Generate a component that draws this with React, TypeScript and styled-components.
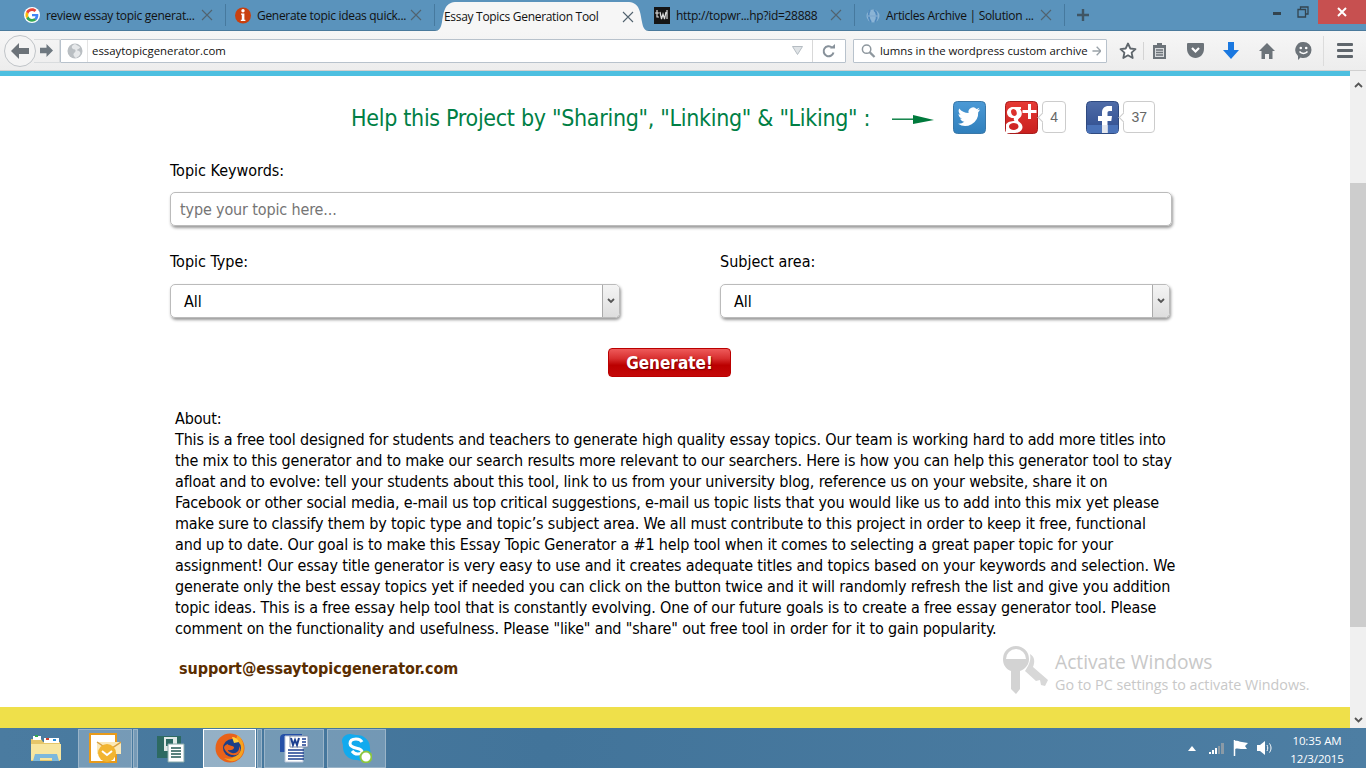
import React from "react";
import styled, { createGlobalStyle } from "styled-components";

const GlobalStyle = createGlobalStyle`
  html, body { margin: 0; padding: 0; background: #fff; overflow: hidden; }
  * { box-sizing: border-box; }
`;

const Close = () => (
  <svg width="12" height="12" viewBox="0 0 12 12"><path d="M1 1l10 10M11 1L1 11" stroke="#52636f" strokeWidth="1.100" fill="none" /></svg>
);

const GoogleIcon = () => (
  <svg width="16" height="16" viewBox="0 0 48 48">
    <circle cx="24" cy="24" r="24" fill="#fff" />
    <path d="M43 24.5c0-1.5-.1-2.6-.4-3.8H24v7.2h10.7c-.5 2.8-2 5-4.300 6.500l6.600 5.100C41 36 43 30.800 43 24.500z" fill="#4285f4" />
    <path d="M24 44c5.400 0 9.900-1.800 13-4.900l-6.600-5.100c-1.700 1.200-4 2-6.400 2-5 0-9.200-3.300-10.700-7.900l-6.800 5.300C9.800 39.800 16.400 44 24 44z" fill="#34a853" />
    <path d="M13.300 28.100c-.8-2.600-.8-5.500 0-8.200L6.500 14.600c-2.900 5.800-2.900 13 0 18.800z" fill="#fbbc05" />
    <path d="M24 12c3 0 5.600 1 7.600 3l5.700-5.700C33.900 6 29.400 4 24 4 16.400 4 9.800 8.200 6.500 14.600l6.800 5.300C14.800 15.300 19 12 24 12z" fill="#ea4335" />
  </svg>
);

const InfoIcon = () => (
  <svg width="16" height="17" viewBox="0 0 16 17">
    <circle cx="8" cy="8.500" r="8" fill="#c9400f" />
    <circle cx="8" cy="3.700" r="1.700" fill="#fff" />
    <path d="M6 6.500h3.400v6.300h1v1.200H5.800v-1.200h1V7.700H6z" fill="#fff" />
  </svg>
);

const TwIcon = () => (
  <svg width="16" height="17" viewBox="0 0 16 17">
    <rect width="16" height="17" fill="#151515" />
    <path d="M1 6h4M3 3v7h2M6 5l1.500 7L9 7l1.500 5L12 5M13 3v9" stroke="#ddd" strokeWidth="1.200" fill="none" />
  </svg>
);

const GlobeSmall = () => (
  <svg width="14" height="17" viewBox="0 0 14 17">
    <circle cx="7" cy="9" r="6.500" fill="#9fc2e0" opacity=".7" />
    <path d="M4 3c-2 3-2 8 1 12M8 3c3 2 4 8 1 12" stroke="#4f88bc" strokeWidth="1.800" fill="none" />
    <path d="M1 9h11" stroke="#7ea9cf" strokeWidth="1.400" />
  </svg>
);

const TABS = [
  { icon: <GoogleIcon />, title: "review essay topic generat...", width: 211, pad: 9 },
  { icon: <InfoIcon />, title: "Generate topic ideas quick...", width: 209, pad: 9 },
];

const TABS_AFTER = [
  { icon: <TwIcon />, title: "http://topwr...hp?id=28888", width: 208, pad: 7 },
  { icon: <GlobeSmall />, title: "Articles Archive | Solution ...", width: 210, pad: 11 },
];

const Browser = () => (
  <>
    <TabStrip>
      {TABS.map((t) => (
        <Tab key={t.title} $w={t.width} $pl={t.pad}>
          {t.icon}
          <TabTitle>{t.title}</TabTitle>
          <Close />
        </Tab>
      ))}
      <ActiveTab>
        <TabTitle>Essay Topics Generation Tool</TabTitle>
        <Close />
      </ActiveTab>
      {TABS_AFTER.map((t) => (
        <Tab key={t.title} $w={t.width} $pl={t.pad}>
          {t.icon}
          <TabTitle>{t.title}</TabTitle>
          <Close />
        </Tab>
      ))}
      <NewTab>
        <svg width="14" height="14" viewBox="0 0 14 14"><path d="M7 1v12M1 7h12" stroke="#3f5564" strokeWidth="2.400" /></svg>
      </NewTab>
      <WindowButtons>
        <WinBtn>
          <svg width="10" height="10" viewBox="0 0 10 10"><rect x="1" y="5" width="8" height="3" fill="#33444f" /></svg>
        </WinBtn>
        <WinBtn>
          <svg width="12" height="12" viewBox="0 0 12 12"><path d="M3.500 3V1h7.500v7H9M1 3.500h7.500V11H1z" stroke="#33444f" strokeWidth="1.300" fill="none" /></svg>
        </WinBtn>
        <WinClose>
          <svg width="10" height="10" viewBox="0 0 10 10"><path d="M1 1l8 8M9 1L1 9" stroke="#fff" strokeWidth="2" /></svg>
        </WinClose>
      </WindowButtons>
    </TabStrip>
    <NavBar>
      <BackBtn>
        <svg width="18" height="16" viewBox="0 0 18 16"><path d="M8 0L0 8l8 8v-5h10V5H8z" fill="#6c7379" /></svg>
      </BackBtn>
      <ForwardBtn>
        <svg width="13" height="13" viewBox="0 0 14 14"><path d="M7 0l7 7-7 7v-4H0V4h7z" fill="#6e7880" /></svg>
      </ForwardBtn>
      <UrlBar>
        <UrlGlobe>
          <svg width="16" height="16" viewBox="0 0 16 16">
            <circle cx="8" cy="8" r="7.500" fill="#b9bec2" />
            <path d="M8 1c-3 1-4 3-2.500 4.500S9 6 8.500 8 6 10 6.500 12 9 15 9 15l3-2c1-2 2-2 1-4s-3-1-3-2 3-1 3-3z" fill="#e6e8ea" />
          </svg>
        </UrlGlobe>
        <UrlText>essaytopicgenerator.com</UrlText>
        <UrlDrop>
          <svg width="11" height="9" viewBox="0 0 11 9"><path d="M.500.500h10L5.500 8.500z" fill="#dfe3e6" stroke="#b5bcc2" /></svg>
        </UrlDrop>
        <UrlReload>
          <svg width="14" height="14" viewBox="0 0 14 14"><path d="M11.500 8.500A5 5 0 1 1 10 3.500" stroke="#87919a" strokeWidth="2" fill="none" /><path d="M8 4.500h5V0z" fill="#87919a" /></svg>
        </UrlReload>
      </UrlBar>
      <SearchBar>
        <svg width="16" height="16" viewBox="0 0 16 16"><circle cx="6" cy="6" r="4.500" stroke="#8e979e" strokeWidth="1.600" fill="#fff" /><path d="M9.500 9.500l5 5" stroke="#8e979e" strokeWidth="2.400" /></svg>
        <SearchText>lumns in the wordpress custom archive</SearchText>
        <svg width="10" height="10" viewBox="0 0 10 10"><path d="M5 .5L9.500 5 5 9.500M.5 5h8.500" stroke="#9aa2a8" strokeWidth="1.500" fill="none" /></svg>
      </SearchBar>
      <ToolIcons>
        <ToolIcon>
          <svg width="18" height="18" viewBox="0 0 18 18"><path d="M9 1.500l2.300 5 5.200.6-3.900 3.600 1.100 5.300L9 13.300 4.300 16l1.100-5.300L1.500 7.100l5.200-.6z" stroke="#5f666c" strokeWidth="1.800" fill="#fff" strokeLinejoin="round" /></svg>
        </ToolIcon>
        <ToolDivider />
        <ToolIcon>
          <svg width="15" height="17" viewBox="0 0 15 17"><path d="M1 3h4V1h5v2h4v14H1z" fill="#6c7379" /><path d="M3 6h9v9H3z" fill="#d8dbdd" /><path d="M4 8h7M4 10.500h7M4 13h7" stroke="#6c7379" strokeWidth="1.300" /></svg>
        </ToolIcon>
        <ToolIcon>
          <svg width="17" height="15" viewBox="0 0 17 15"><path d="M1 0h15a1 1 0 0 1 1 1v5c0 5-4 9-8.500 9S0 11 0 6V1a1 1 0 0 1 1-1z" fill="#6c7379" /><path d="M5 5l3.500 3.500L12 5" stroke="#fff" strokeWidth="2.200" fill="none" /></svg>
        </ToolIcon>
        <ToolIcon>
          <svg width="16" height="17" viewBox="0 0 16 17"><path d="M5 0h6v8h5l-8 9-8-9h5z" fill="#1a78e0" /></svg>
        </ToolIcon>
        <ToolIcon>
          <svg width="16" height="16" viewBox="0 0 16 16"><path d="M8 0l8 8h-2.500v8H10v-5H6v5H2.500V8H0z" fill="#6c7379" /></svg>
        </ToolIcon>
        <ToolIcon>
          <svg width="17" height="18" viewBox="0 0 17 18"><path d="M8.500 0a8 8 0 0 1 0 16c-1 0-2 0-3-.5L3 18v-4A8 8 0 0 1 8.500 0z" fill="#6c7379" /><circle cx="5.800" cy="6" r="1.300" fill="#fff" /><circle cx="11.200" cy="6" r="1.300" fill="#fff" /><path d="M4.500 9.500c2 2.500 6 2.500 8 0" stroke="#fff" strokeWidth="1.500" fill="none" /></svg>
        </ToolIcon>
      </ToolIcons>
      <MenuDivider />
      <MenuIcon>
        <span /><span /><span />
      </MenuIcon>
    </NavBar>
    <CyanStrip />
  </>
);

const TwitterTile = () => (
  <svg width="33" height="33" viewBox="0 0 33 33">
    <defs>
      <linearGradient id="twg" x1="0" y1="0" x2="0" y2="1"><stop offset="0" stopColor="#4c9ad6" /><stop offset="1" stopColor="#2f7fbc" /></linearGradient>
    </defs>
    <rect x=".5" y=".5" width="32" height="32" rx="4" fill="url(#twg)" stroke="#3a78a8" />
    <path d="M27 8.600c-.8.400-1.700.6-2.600.7.900-.6 1.600-1.400 2-2.500-.9.500-1.900.9-2.900 1.100a4.600 4.600 0 0 0-7.900 4.200C11.800 12 8.400 10.200 6.200 7.400c-1.200 2.100-.6 4.800 1.400 6.100-.7 0-1.400-.2-2.100-.6 0 2.200 1.600 4.200 3.700 4.600-.7.200-1.400.2-2.100.1.600 1.900 2.300 3.200 4.300 3.200A9.300 9.300 0 0 1 5 22.800a13.100 13.100 0 0 0 20.200-11.600c.8-.7 1.400-1.500 1.800-2.600z" fill="#fff" />
  </svg>
);

const GplusTile = () => (
  <svg width="33" height="33" viewBox="0 0 33 33">
    <defs>
      <linearGradient id="gpg" x1="0" y1="0" x2="0" y2="1"><stop offset="0" stopColor="#e63a35" /><stop offset="1" stopColor="#c9201f" /></linearGradient>
    </defs>
    <rect x=".5" y=".5" width="32" height="32" rx="4" fill="url(#gpg)" stroke="#a81c1c" />
    <path d="M16 6H8C4.500 6 2 8.500 2 11.500S4.500 17 8 17h1c-.5 1-.3 2 .5 3-3 0-7.500 1-8.500 3.500V32h9c4 0 7.500-2.500 7.500-6 0-4-4.500-5-4.500-7 0-1.500 3.800-2.500 3.800-6.500 0-2-1-3.500-1.800-4.500H16zM8.500 8c2 0 3.300 2.200 3.300 4.300 0 1.700-1 2.700-2.500 2.700-2 0-3.300-2.400-3.300-4.400C6 9 7 8 8.500 8zm.4 14c2.600 0 4.600 1.500 4.600 3.500 0 1.800-1.800 3.500-4.500 3.500-3 0-5-1.500-5-3.500s2.200-3.500 4.900-3.500z" fill="#fff" />
    <path d="M23 3h3v6h5.500v3H26v6h-3v-6h-5.500V9H23z" fill="#fff" />
  </svg>
);

const FacebookTile = () => (
  <svg width="33" height="33" viewBox="0 0 33 33">
    <defs>
      <linearGradient id="fbg" x1="0" y1="0" x2="0" y2="1"><stop offset="0" stopColor="#4f6ca8" /><stop offset="1" stopColor="#2f4d8e" /></linearGradient>
    </defs>
    <rect x=".5" y=".5" width="32" height="32" rx="4" fill="url(#fbg)" stroke="#2f4a80" />
    <path d="M1 24h31v7a1 1 0 0 1-1 1H2a1 1 0 0 1-1-1z" fill="#4a72b8" />
    <path d="M16 32V20h-4v-5h4v-3.500C16 7.500 18.500 5 22.500 5H26v5h-2.500c-1.500 0-2 .7-2 2v3H26l-.7 5h-3.800v12z" fill="#fff" />
    <path d="M16 24h5.500v8H16z" fill="#e4e7ee" />
  </svg>
);

const TopicForm = () => (
  <Form>
    <ShareRow>
      <ShareText>Help this Project by "Sharing", "Linking" &amp; "Liking" :</ShareText>
      <ShareArrow>
        <svg width="42" height="10" viewBox="0 0 42 10"><path d="M0 4.200h22" stroke="#007a3c" strokeWidth="1.400" /><path d="M21 0l21 5-21 4z" fill="#007a3c" /></svg>
      </ShareArrow>
      <Social $gap={19}><TwitterTile /></Social>
      <Social $gap={20}>
        <GplusTile />
        <Count $w={24}>4</Count>
      </Social>
      <Social $gap={0}>
        <FacebookTile />
        <Count $w={32}>37</Count>
      </Social>
    </ShareRow>
    <FieldLabel>Topic Keywords:</FieldLabel>
    <TextField>type your topic here...</TextField>
    <SelectRow>
      <SelectColumn>
        <FieldLabel>Topic Type:</FieldLabel>
        <SelectBox>
          <SelectValue>All</SelectValue>
          <SelectArrow><Chevron /></SelectArrow>
        </SelectBox>
      </SelectColumn>
      <SelectColumn>
        <FieldLabel>Subject area:</FieldLabel>
        <SelectBox>
          <SelectValue>All</SelectValue>
          <SelectArrow><Chevron /></SelectArrow>
        </SelectBox>
      </SelectColumn>
    </SelectRow>
    <ButtonRow>
      <GenerateButton>Generate!</GenerateButton>
    </ButtonRow>
    <About>
      About:<br />
      This is a free tool designed for students and teachers to generate high quality essay topics. Our team is working hard to add more titles into<br />
      the mix to this generator and to make our search results more relevant to our searchers. Here is how you can help this generator tool to stay<br />
      afloat and to evolve: tell your students about this tool, link to us from your university blog, reference us on your website, share it on<br />
      Facebook or other social media, e-mail us top critical suggestions, e-mail us topic lists that you would like us to add into this mix yet please<br />
      make sure to classify them by topic type and topic’s subject area. We all must contribute to this project in order to keep it free, functional<br />
      and up to date. Our goal is to make this Essay Topic Generator a #1 help tool when it comes to selecting a great paper topic for your<br />
      assignment! Our essay title generator is very easy to use and it creates adequate titles and topics based on your keywords and selection. We<br />
      generate only the best essay topics yet if needed you can click on the button twice and it will randomly refresh the list and give you addition<br />
      topic ideas. This is a free essay help tool that is constantly evolving. One of our future goals is to create a free essay generator tool. Please<br />
      comment on the functionality and usefulness. Please "like" and "share" out free tool in order for it to gain popularity.
    </About>
    <Support>support@essaytopicgenerator.com</Support>
  </Form>
);

const Chevron = () => (
  <svg width="8" height="6" viewBox="0 0 8 6"><path d="M1 1l3 3 3-3" stroke="#555" strokeWidth="1.800" fill="none" /></svg>
);

const Taskbar = () => (
  <TaskbarRow>
    <TaskPlain $w={78} $pl={30}>
      <svg width="32" height="30" viewBox="0 0 32 30">
        <path d="M1 6h10l2 3h17v19H1z" fill="#e6c66a" />
        <path d="M3 3h8v4H3z" fill="#fff" /><path d="M5 2h3v2H5z" fill="#2fa84f" />
        <path d="M14 5h15v5H14z" fill="#fff" /><path d="M16 5h3v2h-3z" fill="#d04030" /><path d="M23 6h3v2h-3z" fill="#2a90d8" />
        <path d="M1 11h30v16H1z" fill="#f8e6a0" />
        <path d="M5 21h22l2 7H22v-3H10v3H3z" fill="#7db8dc" />
      </svg>
    </TaskPlain>
    <TaskButton $w={54}>
      <svg width="32" height="30" viewBox="0 0 32 30">
        <path d="M1 1h26v28H1z" fill="#fff" stroke="#e89a1a" strokeWidth="2" />
        <path d="M8 9h24v12H8z" fill="#fbe9b8" />
        <path d="M8 9l12 8 12-8" stroke="#d8a040" strokeWidth="1.500" fill="none" />
        <circle cx="18" cy="20" r="9" fill="#f2b530" />
        <path d="M13 18l5 4 5-4" stroke="#fff" strokeWidth="2" fill="none" />
      </svg>
    </TaskButton>
    <TaskStack />
    <TaskPlain $w={65} $pl={17}>
      <svg width="30" height="30" viewBox="0 0 30 30">
        <path d="M2 3h24v22H2z" fill="#2d6a62" />
        <path d="M9 4h13v14H9z" fill="#dfe8e6" />
        <path d="M11 6h7v7h-7z" fill="#2d6a62" />
        <path d="M13 11h16v18H13z" fill="#fff" stroke="#8aa" />
        <path d="M16 15h10M16 18h10M16 21h10M16 24h10" stroke="#245a54" strokeWidth="1.500" />
      </svg>
    </TaskPlain>
    <TaskActive>
      <svg width="30" height="30" viewBox="0 0 30 30">
        <circle cx="15" cy="15" r="14.500" fill="#e8621a" />
        <path d="M22 2c6 3 9 13 5 20S15 30 9 25c5 2 11 0 13-5s1-8-3-9-7 2-7 2 1-5 6-6 4-5 4-5z" fill="#f6a21e" />
        <circle cx="17" cy="15" r="9" fill="#1b3f88" />
        <path d="M9 15c2 5 7 8 12 7s5-6 3-9c1 5-3 8-7 7s-4-3-4-3 5 1 6-2-7-2-6-4c-3 1-4 2-4 4z" fill="#e8621a" />
        <path d="M17 4c3 0 6 2 7 5l-5 1z" fill="#ffcf3a" />
      </svg>
    </TaskActive>
    <TaskStack />
    <TaskButton $w={60} $ml={2}>
      <svg width="30" height="30" viewBox="0 0 30 30">
        <path d="M1 5c0-3 2-4 4-4h18v18H1z" fill="#2550a8" />
        <path d="M6 3h18v26H6z" fill="#fff" stroke="#b8c4d8" />
        <path d="M11 3h18v11H11z" fill="#fff" stroke="#7a8aa8" />
        <path d="M12 5l2 7 2-5 2 5 2-7" stroke="#1c3f90" strokeWidth="2" fill="none" />
        <path d="M23 6h4M23 9h4M23 12h4M9 17h16M9 20h16M9 23h16M9 26h16" stroke="#1c3f90" strokeWidth="1.500" />
      </svg>
    </TaskButton>
    <TaskButton $w={59} $ml={3}>
      <svg width="30" height="30" viewBox="0 0 30 30">
        <path d="M8 1c2 0 4 1 6 1a13 13 0 0 1 14 13c0 2 .5 3 .5 5 0 5-4 8-8 8-2 0-4-1-6-1A13 13 0 0 1 1 13c0-2-1-3-1-5 0-4 4-7 8-7z" fill="#12aaee" />
        <path d="M20 9c-1-2-3-3-6-3-4 0-6 2-6 4.500 0 6 12 3.500 12 8 0 1.500-2 2.500-4.500 2.500-3 0-4-1-5.500-3" stroke="#fff" strokeWidth="3" fill="none" />
        <circle cx="24" cy="24" r="5.500" fill="#fff" stroke="#8cc63f" strokeWidth="2" />
      </svg>
    </TaskButton>
    <Tray>
      <TrayArrow>
        <svg width="8" height="5" viewBox="0 0 8 5"><path d="M0 5l4-5 4 5z" fill="#fff" /></svg>
      </TrayArrow>
      <svg width="16" height="12" viewBox="0 0 16 12"><path d="M0 10h2v2H0zM3 8h2v4H3zM6 6h2v6H6z" fill="#fff" /><path d="M9 4h2v8H9zM12 1h3v11h-3z" fill="#8a9aa6" /></svg>
      <svg width="16" height="16" viewBox="0 0 16 16"><path d="M1.500 0v16" stroke="#fff" strokeWidth="1.500" /><path d="M2 1c4-1 4 1 7 1l6 1-3 3 2 3-6 0c-2 0-3-1-6 0z" fill="#fff" /></svg>
      <svg width="16" height="14" viewBox="0 0 16 14"><path d="M0 4h3l5-4v14l-5-4H0z" fill="#fff" /><path d="M10 4c1 2 1 4 0 6M12.500 2.500c2 3 2 6 0 9" stroke="#fff" strokeWidth="1" fill="none" /></svg>
      <Clock>
        <span>10:35 AM</span>
        <span>12/3/2015</span>
      </Clock>
    </Tray>
  </TaskbarRow>
);

const App = () => (
  <Screen>
    <GlobalStyle />
    <Browser />
    <PageArea>
      <PageColumn>
        <TopicForm />
        <YellowFooter />
      </PageColumn>
      <Scrollbar>
        <ScrollArrow>
          <svg width="9" height="6" viewBox="0 0 9 6"><path d="M1 5l3.500-3.500L8 5" stroke="#555" strokeWidth="1.800" fill="none" /></svg>
        </ScrollArrow>
        <ScrollGap $h={90} />
        <ScrollThumb />
        <ScrollGap $h={84} />
        <ScrollArrow>
          <svg width="9" height="6" viewBox="0 0 9 6"><path d="M1 1l3.500 3.500L8 1" stroke="#555" strokeWidth="1.800" fill="none" /></svg>
        </ScrollArrow>
      </Scrollbar>
      <Watermark>
        <WatermarkKey>
          <svg width="48" height="50" viewBox="0 0 48 50">
            <path d="M14 1a13 13 0 0 1 13 13c0 6-4 10-9 12v18l-4 5-5-5V26C4 24 1 20 1 14A13 13 0 0 1 14 1z" fill="#d3d3d3" />
            <path d="M4 14a10 10 0 0 1 20 0z" fill="#fff" />
            <path d="M28 9c5 3 5 8 3 13l15 13-3 6-4-1-1-5-4 1-11-10 3-5c2-4 3-8 2-12z" fill="#d8d8d8" />
          </svg>
        </WatermarkKey>
        <WatermarkText>
          <WatermarkTitle>Activate Windows</WatermarkTitle>
          <WatermarkSub>Go to PC settings to activate Windows.</WatermarkSub>
        </WatermarkText>
      </Watermark>
    </PageArea>
    <Taskbar />
  </Screen>
);

export default App;

const Screen = styled.div`
  width: 1366px;
  height: 768px;
  display: flex;
  flex-direction: column;
  overflow: hidden;
  background: #fff;
`;

const TabStrip = styled.div`
  height: 31px;
  flex: none;
  display: flex;
  align-items: center;
  padding-left: 15px;
  background: #5a93bc;
  border-bottom: 1px solid #4a7a9c;
`;

const Tab = styled.div<{ $w: number; $pl: number }>`
  width: ${({ $w }) => $w}px;
  height: 22px;
  flex: none;
  display: flex;
  align-items: center;
  padding: 0 12px 0 ${({ $pl }) => $pl}px;
  border-right: 1px solid #46799e;
  svg { flex: none; }
`;

const ActiveTab = styled.div`
  width: 214px;
  height: 29px;
  flex: none;
  align-self: flex-end;
  display: flex;
  align-items: center;
  padding: 0 15px 0 9px;
  margin: 0 -2px -1px 0;
  background: #f6f6f6;
  clip-path: path("M0 29 C4 29 6 26 7 20 C9 8 10 0 22 0 L192 0 C204 0 205 8 207 20 C208 26 210 29 214 29 Z");
  svg { flex: none; }
`;

const TabTitle = styled.span`
  flex: 1;
  padding-left: 6px;
  font: 12px "Open Sans", sans-serif;
  letter-spacing: -0.3px;
  color: #111;
  white-space: nowrap;
  ${ActiveTab} & { padding-left: 0; }
`;

const NewTab = styled.div`
  margin-left: 11px;
  display: flex;
`;

const WindowButtons = styled.div`
  margin-left: auto;
  align-self: flex-start;
  display: flex;
`;

const WinBtn = styled.div`
  width: 26px;
  height: 24px;
  display: flex;
  align-items: center;
  justify-content: center;
`;

const WinClose = styled.div`
  width: 48px;
  height: 24px;
  margin-left: 2px;
  display: flex;
  align-items: center;
  justify-content: center;
  background: #c75050;
`;

const NavBar = styled.div`
  height: 40px;
  flex: none;
  display: flex;
  align-items: center;
  padding-left: 4px;
  background: linear-gradient(#f6f6f6, #ededed);
  border-bottom: 1px solid #d0d0d0;
`;

const BackBtn = styled.div`
  width: 32px;
  height: 32px;
  flex: none;
  display: flex;
  align-items: center;
  justify-content: center;
  border: 1px solid #c0c4c8;
  border-radius: 50%;
  background: #f4f4f4;
  z-index: 1;
`;

const ForwardBtn = styled.div`
  width: 26px;
  height: 24px;
  margin-left: -2px;
  flex: none;
  display: flex;
  align-items: center;
  justify-content: center;
  border: 1px solid #d9dcde;
  border-left: none;
`;

const UrlBar = styled.div`
  width: 786px;
  height: 24px;
  flex: none;
  display: flex;
  align-items: center;
  background: #fff;
  border: 1px solid #b8c2cc;
  border-radius: 1px;
`;

const UrlGlobe = styled.div`
  width: 27px;
  height: 100%;
  padding-left: 6px;
  display: flex;
  align-items: center;
  border-right: 1px solid #e4e4e4;
`;

const UrlText = styled.span`
  flex: 1;
  padding-left: 4px;
  font: 11.4px "Open Sans", sans-serif;
  color: #111;
`;

const UrlDrop = styled.div`
  width: 30px;
  height: 100%;
  display: flex;
  align-items: center;
  justify-content: center;
  border-right: 1px solid #d8d8d8;
`;

const UrlReload = styled.div`
  width: 32px;
  display: flex;
  justify-content: center;
`;

const SearchBar = styled.div`
  width: 254px;
  height: 24px;
  margin-left: 7px;
  flex: none;
  display: flex;
  align-items: center;
  gap: 4px;
  padding: 0 5px 0 7px;
  background: #fff;
  border: 1px solid #b8c2cc;
  border-radius: 1px;
`;

const SearchText = styled.span`
  flex: 1;
  font: 11.4px "Open Sans", sans-serif;
  letter-spacing: -0.03px;
  color: #111;
  white-space: nowrap;
`;

const ToolIcons = styled.div`
  display: flex;
  align-items: center;
  margin-left: 3px;
`;

const ToolIcon = styled.div`
  width: 36px;
  display: flex;
  justify-content: center;
  &:nth-child(3) { margin-left: -3px; }
`;

const ToolDivider = styled.div`
  width: 1px;
  height: 18px;
  margin-left: -3px;
  background: #d4d4d4;
`;

const MenuDivider = styled.div`
  width: 1px;
  height: 30px;
  margin-left: 2px;
  background: #dcdcdc;
`;

const MenuIcon = styled.div`
  width: 16px;
  margin-left: 13px;
  display: flex;
  flex-direction: column;
  gap: 3px;
  span {
    height: 3px;
    border-radius: 1px;
    background: #5f666c;
  }
`;

const CyanStrip = styled.div`
  height: 5px;
  flex: none;
  background: #4dbfe0;
  border-right: 16px solid #f0f0f0;
`;

const PageArea = styled.div`
  position: relative;
  flex: 1;
  min-height: 0;
  display: flex;
`;

const PageColumn = styled.div`
  flex: 1;
  min-width: 0;
  display: flex;
  flex-direction: column;
`;

const Form = styled.div`
  flex: 1;
  min-height: 0;
  padding: 0 178px 0 170px;
  font-family: "DejaVu Sans", Tahoma, sans-serif;
  font-stretch: condensed;
`;

const ShareRow = styled.div`
  height: 82px;
  display: flex;
  align-items: center;
  padding-left: 181px;
`;

const ShareText = styled.div`
  margin-top: 2px;
  font-size: 23px;
  letter-spacing: -0.3px;
  color: #007f45;
  white-space: nowrap;
`;

const ShareArrow = styled.div`
  margin: 6px 19px 0 22px;
  display: flex;
`;

const Social = styled.div<{ $gap: number }>`
  display: flex;
  align-items: center;
  margin-right: ${({ $gap }) => $gap}px;
`;

const Count = styled.div<{ $w: number }>`
  position: relative;
  width: ${({ $w }) => $w}px;
  height: 32px;
  margin-left: 4px;
  display: flex;
  align-items: center;
  justify-content: center;
  border: 1px solid #ccc;
  border-radius: 4px;
  background: #fff;
  font: 14px "Liberation Sans", Arial, sans-serif;
  color: #666;
  &::before {
    content: "";
    position: absolute;
    left: -4px;
    top: 12px;
    width: 6px;
    height: 6px;
    background: #fff;
    border-left: 1px solid #ccc;
    border-bottom: 1px solid #ccc;
    transform: rotate(45deg);
  }
`;

const FieldLabel = styled.div`
  height: 22px;
  margin-top: 2px;
  font-size: 16px;
  line-height: 22px;
  color: #000;
`;

const TextField = styled.div`
  height: 34px;
  margin-top: 10px;
  padding-left: 9px;
  display: flex;
  align-items: center;
  border: 1px solid #bbb;
  border-radius: 5px;
  box-shadow: 1px 2px 3px #999;
  font-size: 16px;
  letter-spacing: -0.14px;
  color: #757575;
`;

const SelectRow = styled.div`
  display: flex;
  gap: 100px;
  margin-top: 23px;
  padding-right: 2px;
`;

const SelectColumn = styled.div`
  width: 450px;
`;

const SelectBox = styled.div`
  height: 34px;
  margin-top: 11px;
  display: flex;
  align-items: center;
  border: 1px solid #bbb;
  border-radius: 5px;
  box-shadow: 1px 2px 3px #999;
  overflow: hidden;
`;

const SelectValue = styled.span`
  flex: 1;
  padding-left: 13px;
  font-size: 16px;
  color: #000;
`;

const SelectArrow = styled.div`
  width: 17px;
  height: 100%;
  display: flex;
  align-items: center;
  justify-content: center;
  border-left: 1px solid #aaa;
  background: linear-gradient(#f4f4f4, #dedede);
`;

const ButtonRow = styled.div`
  display: flex;
  margin-top: 30px;
  padding-left: 438px;
`;

const GenerateButton = styled.button`
  width: 123px;
  height: 29px;
  padding: 1px 0 0;
  border: 1px solid #b00;
  border-radius: 4px;
  background: linear-gradient(#ee5a5a 0%, #d83030 35%, #bb0000 60%, #c40808 100%);
  color: #fff;
  font-family: "DejaVu Sans", Tahoma, sans-serif;
  font-stretch: condensed;
  font-weight: bold;
  font-size: 17px;
  text-shadow: 1px 1px 1px #7a0000;
`;

const About = styled.div`
  margin-top: 31px;
  padding-left: 5px;
  font-size: 16px;
  line-height: 21px;
  letter-spacing: -0.16px;
  color: #000;
  white-space: nowrap;
`;

const Support = styled.div`
  margin-top: 20px;
  padding-left: 9px;
  font-weight: bold;
  font-size: 16px;
  letter-spacing: -0.06px;
  color: #5a2d00;
`;

const YellowFooter = styled.div`
  height: 21px;
  flex: none;
  background: #efe04a;
`;

const Scrollbar = styled.div`
  width: 16px;
  flex: none;
  display: flex;
  flex-direction: column;
  background: #f0f0f0;
`;

const ScrollArrow = styled.div`
  height: 17px;
  flex: none;
  display: flex;
  align-items: center;
  justify-content: center;
`;

const ScrollGap = styled.div<{ $h: number }>`
  height: ${({ $h }) => $h}px;
  flex: none;
`;

const ScrollThumb = styled.div`
  flex: 1;
  background: #cdcdcd;
`;

const Watermark = styled.div`
  position: absolute;
  left: 1002px;
  top: 572px;
  display: flex;
  gap: 5px;
  pointer-events: none;
`;

const WatermarkKey = styled.div`
  margin-top: -3px;
`;

const WatermarkText = styled.div`
  display: flex;
  flex-direction: column;
`;

const WatermarkTitle = styled.div`
  font: 19.200px "Open Sans", sans-serif;
  line-height: 27px;
  color: #c8c8c8;
`;

const WatermarkSub = styled.div`
  font: 14.300px "Open Sans", sans-serif;
  line-height: 20px;
  color: #c8c8c8;
  white-space: nowrap;
`;

const TaskbarRow = styled.div`
  height: 40px;
  flex: none;
  display: flex;
  align-items: center;
  background: linear-gradient(90deg, #4a7ba0, #42749a 40%, #4d7ea3);
`;

const TaskPlain = styled.div<{ $w: number; $pl: number }>`
  width: ${({ $w }) => $w}px;
  height: 100%;
  padding-left: ${({ $pl }) => $pl}px;
  display: flex;
  align-items: center;
`;

const TaskButton = styled.div<{ $w: number; $ml?: number }>`
  width: ${({ $w }) => $w}px;
  height: 39px;
  margin-left: ${({ $ml }) => $ml ?? 0}px;
  display: flex;
  align-items: center;
  justify-content: center;
  border: 1px solid #9ab4c8;
  background: rgba(255, 255, 255, 0.25);
`;

const TaskStack = styled.div`
  width: 5px;
  height: 39px;
  flex: none;
  margin-left: 1px;
  border: 1px solid #9ab4c8;
  background: rgba(255, 255, 255, 0.25);
`;

const TaskActive = styled(TaskButton).attrs({ $w: 53 })`
  border: 1px solid #fff;
  background: rgba(255, 255, 255, 0.42);
`;

const Tray = styled.div`
  margin-left: auto;
  padding-right: 19px;
  display: flex;
  align-items: center;
  gap: 8px;
`;

const TrayArrow = styled.div`
  display: flex;
  margin-right: 5px;
`;

const Clock = styled.div`
  width: 60px;
  margin-left: 6px;
  display: flex;
  flex-direction: column;
  align-items: center;
  gap: 3px;
  padding-top: 2px;
  font: 11.5px "Open Sans", sans-serif;
  letter-spacing: -0.1px;
  color: #fff;
`;
